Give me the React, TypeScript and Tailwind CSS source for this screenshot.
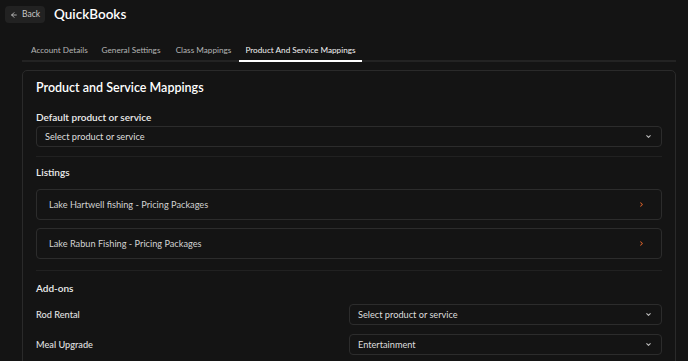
import { ArrowLeft, ChevronDown, ChevronRight } from 'lucide-react'

const tabs = [
  { label: 'Account Details', w: 'w-[72px] pl-[9px] justify-start' },
  { label: 'General Settings', w: 'w-[74px] justify-center' },
  { label: 'Class Mappings', w: 'w-[71px] justify-center' },
  { label: 'Product And Service Mappings', w: 'w-[123px] justify-center', active: true },
]
const listings = ['Lake Hartwell fishing - Pricing Packages', 'Lake Rabun Fishing - Pricing Packages']
const addons = [
  { label: 'Rod Rental', value: 'Select product or service' },
  { label: 'Meal Upgrade', value: 'Entertainment' },
]

function Select({ value }: { value: string }) {
  return (
    <div className="flex h-[21px] items-center justify-between rounded-[4px] border border-[#2c2c2c] pl-[8px] pr-[9px] text-[9.2px] text-[#dedede]">
      <span>{value}</span>
      <ChevronDown className="h-[7px] w-[7px] text-[#bdbdbd]" strokeWidth={3.5} />
    </div>
  )
}

export default function App() {
  return (
    <div className="h-[361px] overflow-hidden bg-[#141414] text-[#ececec]" style={{ fontFamily: 'Lato, "Open Sans", sans-serif' }}>
      {/* header */}
      <div className="flex items-center gap-[9px] pl-[5px] pt-[6px]">
        <button className="flex h-[17px] w-[40px] items-center justify-center gap-[4px] rounded-[4px] bg-[#222222] text-[8.5px] text-[#c8c8c8]">
          <ArrowLeft className="h-[8px] w-[8px]" strokeWidth={2.5} />
          Back
        </button>
        <h1 className="text-[13.5px] font-semibold leading-none text-white">QuickBooks</h1>
      </div>

      {/* tabs */}
      <div className="ml-[22px] mr-[12px] mt-[21px] flex border-b-2 border-[#232323]">
        {tabs.map((t) => (
          <div
            key={t.label}
            className={`-mb-[2px] flex border-b-2 pb-[4px] text-[8.2px] leading-[12px] ${t.w} ${
              t.active ? 'border-white text-[#f2f2f2]' : 'border-transparent text-[#b5b5b5]'
            }`}
          >
            {t.label}
          </div>
        ))}
      </div>

      {/* card */}
      <div className="ml-[22px] mr-[12px] mt-[8px] h-[400px] rounded-t-[5px] border border-[#2a2a2a] px-[13px] pt-[7px]">
        <h2 className="text-[12.5px] font-semibold leading-[20px] text-white">Product and Service Mappings</h2>

        <div className="mt-[12px] text-[10px] font-semibold leading-[14px]">Default product or service</div>
        <div className="mt-[2px]">
          <Select value="Select product or service" />
        </div>

        <div className="mt-[9px] h-px bg-[#212121]" />

        <div className="mt-[8px] text-[10px] font-semibold leading-[14px]">Listings</div>
        <div className="mt-[10px] flex flex-col gap-[8px]">
          {listings.map((l) => (
            <div key={l} className="flex h-[31px] items-center justify-between rounded-[4px] border border-[#2c2c2c] pl-[12px] pr-[16px] text-[9.2px] text-[#d2d2d2]">
              <span>{l}</span>
              <ChevronRight className="h-[7px] w-[7px] text-[#d9622b]" strokeWidth={3.5} />
            </div>
          ))}
        </div>

        <div className="mt-[11px] h-px bg-[#212121]" />

        <div className="mt-[10px] text-[10px] font-semibold leading-[14px]">Add-ons</div>
        <div className="mt-[9px] flex flex-col gap-[9px]">
          {addons.map((a) => (
            <div key={a.label} className="flex items-center justify-between">
              <span className="text-[9.2px] font-medium text-[#e2e2e2]">{a.label}</span>
              <div className="w-[313px]">
                <Select value={a.value} />
              </div>
            </div>
          ))}
        </div>
      </div>
    </div>
  )
}
